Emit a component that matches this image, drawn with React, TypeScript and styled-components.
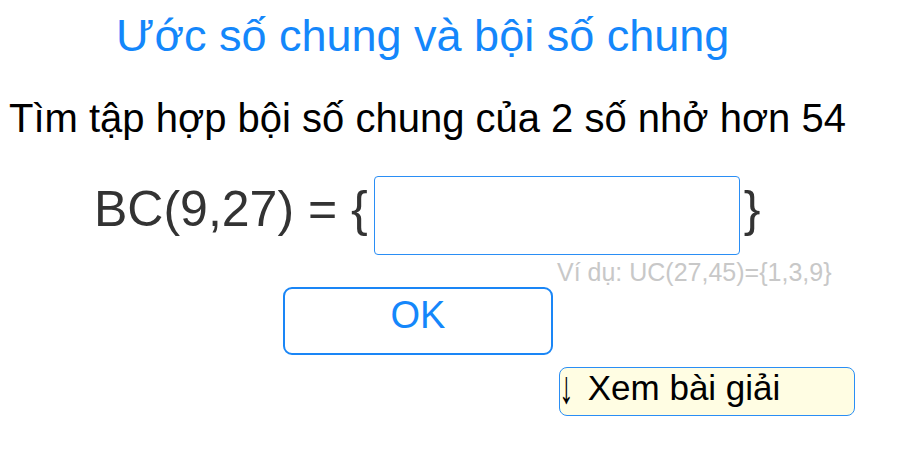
import React from "react";
import styled, { createGlobalStyle } from "styled-components";

const GlobalStyle = createGlobalStyle`
  html, body {
    margin: 0;
    padding: 0;
    background: #ffffff;
  }
  body {
    font-family: "Liberation Sans", Arial, sans-serif;
  }
`;

const Page = styled.div`
  width: 906px;
  height: 453px;
  overflow: hidden;
  display: flex;
  flex-direction: column;
  align-items: flex-start;
`;

const Title = styled.h1`
  margin: 9px 0 0 116px;
  font-size: 45px;
  line-height: 53px;
  font-weight: normal;
  color: #1487fb;
`;

const Question = styled.p`
  margin: 33px 0 0 9px;
  font-size: 40px;
  line-height: 46px;
  color: #000;
`;

const EquationRow = styled.div`
  margin: 35px 0 0 94px;
  display: flex;
  align-items: flex-start;
  gap: 6px;
  color: #333;
  font-size: 50px;
  line-height: 58px;
`;

const Brace = styled.span<{ $offset?: number }>`
  margin-top: 4px;
  margin-left: ${(p) => p.$offset ?? 0}px;
`;

const AnswerInput = styled.input`
  box-sizing: border-box;
  width: 366px;
  height: 79px;
  border: 1px solid #2a8ef5;
  border-radius: 4px;
  outline: none;
  font-family: inherit;
  font-size: 36px;
  padding: 0 10px;
`;

const Hint = styled.div`
  margin: 3px 0 0 557px;
  font-size: 25px;
  line-height: 29px;
  color: #c8c8c8;
`;

const OkButton = styled.button`
  box-sizing: border-box;
  margin: 0 0 0 283px;
  width: 270px;
  height: 68px;
  border: 2px solid #1a86f6;
  border-radius: 9px;
  background: #fff;
  color: #1487fb;
  font-family: inherit;
  font-size: 38px;
  line-height: 42px;
  padding: 0 0 12px;
  display: flex;
  align-items: center;
  justify-content: center;
  cursor: pointer;
`;

const SolutionButton = styled.button`
  box-sizing: border-box;
  margin: 12px 0 0 559px;
  width: 296px;
  height: 49px;
  border: 1px solid #2a8ef5;
  border-radius: 8px;
  background: #fffde3;
  color: #000;
  font-family: inherit;
  font-size: 35px;
  line-height: 40px;
  padding: 0;
  text-align: left;
  display: flex;
  align-items: flex-start;
  cursor: pointer;
`;

const Arrow = styled.span`
  display: inline-block;
  font-size: 34px;
  line-height: 40px;
  transform: scale(0.85, 1.35) translateY(-1px);
  margin: 0 3px 0 -2px;
`;

export default function App() {
  return (
    <>
      <GlobalStyle />
      <Page>
        <Title>Ước số chung và bội số chung</Title>
        <Question>Tìm tập hợp bội số chung của 2 số nhở hơn 54</Question>
        <EquationRow>
          <Brace>BC(9,27) = {"{"}</Brace>
          <AnswerInput type="text" />
          <Brace $offset={-2}>{"}"}</Brace>
        </EquationRow>
        <Hint>Ví dụ: UC(27,45)={"{"}1,3,9{"}"}</Hint>
        <OkButton>OK</OkButton>
        <SolutionButton>
          <span>
            <Arrow>↓</Arrow> Xem bài giải
          </span>
        </SolutionButton>
      </Page>
    </>
  );
}
